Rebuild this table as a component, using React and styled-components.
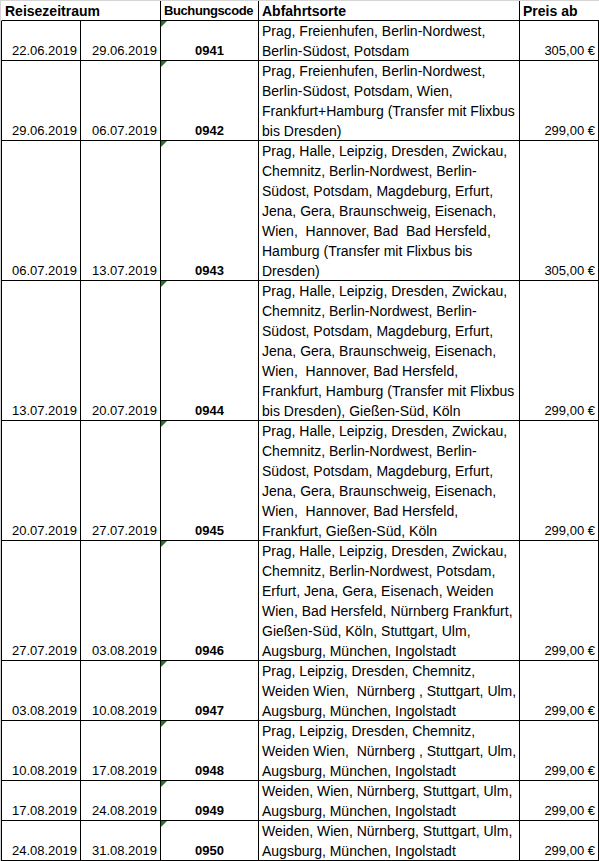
import React from 'react';
import styled, { createGlobalStyle } from 'styled-components';

const GlobalStyle = createGlobalStyle`
  html, body {
    margin: 0;
    padding: 0;
    background: #ffffff;
  }
  body {
    font-family: "Liberation Sans", Arial, sans-serif;
    font-size: 13px;
    color: #000;
  }
`;

const Sheet = styled.div`
  width: 599px;
  box-sizing: border-box;
  border-top: 1px solid #d4d4d4;
  border-left: 1px solid #d4d4d4;
`;

const Row = styled.div`
  display: grid;
  grid-template-columns: 79px 80px 98px 261px 79px;
  height: ${p => p.lines * 20}px;
  border-left: 1px solid ${p => (p.head ? 'transparent' : '#000')};
  border-bottom: 1px solid #000;
  box-sizing: border-box;
  line-height: 20px;
`;

const Cell = styled.div`
  position: relative;
  box-sizing: border-box;
  border-right: 1px solid #000;
  display: flex;
  flex-direction: column;
  justify-content: ${p => (p.top ? 'flex-start' : 'flex-end')};
  align-items: ${p => p.align || 'flex-end'};
  padding: 0 3px;
  white-space: pre;
  font-size: ${p => (p.top ? '14px' : '13px')};
  font-weight: ${p => (p.bold ? 700 : 400)};
`;

const HeadCell = styled.div`
  box-sizing: border-box;
  grid-column: ${p => p.span || 'auto'};
  border-right: 1px solid ${p => (p.noLine ? 'transparent' : '#000')};
  padding: 0 3px;
  font-weight: 700;
  font-size: ${p => (p.wide ? '14px' : '13px')};
  letter-spacing: ${p => (p.wide ? '0' : '-0.4px')};
  white-space: nowrap;
`;

const Flag = styled.span`
  position: absolute;
  left: 0;
  top: 0;
  width: 0;
  height: 0;
  border-top: 6px solid #1e7b1e;
  border-right: 6px solid transparent;
`;

const Line = styled.span`
  display: block;
  height: 20px;
`;

const trips = [
  {
    from: '22.06.2019', to: '29.06.2019', code: '0941', price: '305,00 €',
    places: ['Prag, Freienhufen, Berlin-Nordwest,', 'Berlin-Südost, Potsdam'],
  },
  {
    from: '29.06.2019', to: '06.07.2019', code: '0942', price: '299,00 €',
    places: [
      'Prag, Freienhufen, Berlin-Nordwest,',
      'Berlin-Südost, Potsdam, Wien,',
      'Frankfurt+Hamburg (Transfer mit Flixbus',
      'bis Dresden)',
    ],
  },
  {
    from: '06.07.2019', to: '13.07.2019', code: '0943', price: '305,00 €',
    places: [
      'Prag, Halle, Leipzig, Dresden, Zwickau,',
      'Chemnitz, Berlin-Nordwest, Berlin-',
      'Südost, Potsdam, Magdeburg, Erfurt,',
      'Jena, Gera, Braunschweig, Eisenach,',
      'Wien,  Hannover, Bad  Bad Hersfeld,',
      'Hamburg (Transfer mit Flixbus bis',
      'Dresden)',
    ],
  },
  {
    from: '13.07.2019', to: '20.07.2019', code: '0944', price: '299,00 €',
    places: [
      'Prag, Halle, Leipzig, Dresden, Zwickau,',
      'Chemnitz, Berlin-Nordwest, Berlin-',
      'Südost, Potsdam, Magdeburg, Erfurt,',
      'Jena, Gera, Braunschweig, Eisenach,',
      'Wien,  Hannover, Bad Hersfeld,',
      'Frankfurt, Hamburg (Transfer mit Flixbus',
      'bis Dresden), Gießen-Süd, Köln',
    ],
  },
  {
    from: '20.07.2019', to: '27.07.2019', code: '0945', price: '299,00 €',
    places: [
      'Prag, Halle, Leipzig, Dresden, Zwickau,',
      'Chemnitz, Berlin-Nordwest, Berlin-',
      'Südost, Potsdam, Magdeburg, Erfurt,',
      'Jena, Gera, Braunschweig, Eisenach,',
      'Wien,  Hannover, Bad Hersfeld,',
      'Frankfurt, Gießen-Süd, Köln',
    ],
  },
  {
    from: '27.07.2019', to: '03.08.2019', code: '0946', price: '299,00 €',
    places: [
      'Prag, Halle, Leipzig, Dresden, Zwickau,',
      'Chemnitz, Berlin-Nordwest, Potsdam,',
      'Erfurt, Jena, Gera, Eisenach, Weiden',
      'Wien, Bad Hersfeld, Nürnberg Frankfurt,',
      'Gießen-Süd, Köln, Stuttgart, Ulm,',
      'Augsburg, München, Ingolstadt',
    ],
  },
  {
    from: '03.08.2019', to: '10.08.2019', code: '0947', price: '299,00 €',
    places: [
      'Prag, Leipzig, Dresden, Chemnitz,',
      'Weiden Wien,  Nürnberg , Stuttgart, Ulm,',
      'Augsburg, München, Ingolstadt',
    ],
  },
  {
    from: '10.08.2019', to: '17.08.2019', code: '0948', price: '299,00 €',
    places: [
      'Prag, Leipzig, Dresden, Chemnitz,',
      'Weiden Wien,  Nürnberg , Stuttgart, Ulm,',
      'Augsburg, München, Ingolstadt',
    ],
  },
  {
    from: '17.08.2019', to: '24.08.2019', code: '0949', price: '299,00 €',
    places: ['Weiden, Wien, Nürnberg, Stuttgart, Ulm,', 'Augsburg, München, Ingolstadt'],
  },
  {
    from: '24.08.2019', to: '31.08.2019', code: '0950', price: '299,00 €',
    places: ['Weiden, Wien, Nürnberg, Stuttgart, Ulm,', 'Augsburg, München, Ingolstadt'],
  },
];

export default function App() {
  return (
    <>
      <GlobalStyle />
      <Sheet>
        <Row head lines={1}>
          <HeadCell span="1 / 3" wide>Reisezeitraum</HeadCell>
          <HeadCell>Buchungscode</HeadCell>
          <HeadCell wide>Abfahrtsorte</HeadCell>
          <HeadCell noLine wide>Preis ab</HeadCell>
        </Row>
        {trips.map(t => (
          <Row key={t.code} lines={t.places.length}>
            <Cell>{t.from}</Cell>
            <Cell>{t.to}</Cell>
            <Cell bold align="center">
              <Flag />
              {t.code}
            </Cell>
            <Cell top align="flex-start">
              {t.places.map((p, i) => (
                <Line key={i}>{p}</Line>
              ))}
            </Cell>
            <Cell>{t.price}</Cell>
          </Row>
        ))}
      </Sheet>
    </>
  );
}
